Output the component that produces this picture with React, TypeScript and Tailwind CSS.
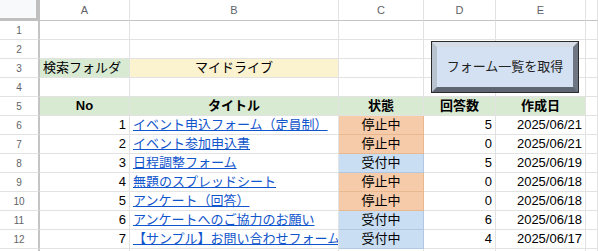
import React from 'react';

type Row = { no: number; title: string; status: '停止中' | '受付中'; count: number; date: string };

const rows: Row[] = [
  { no: 1, title: 'イベント申込フォーム（定員制）', status: '停止中', count: 5, date: '2025/06/21' },
  { no: 2, title: 'イベント参加申込書', status: '停止中', count: 0, date: '2025/06/21' },
  { no: 3, title: '日程調整フォーム', status: '受付中', count: 5, date: '2025/06/19' },
  { no: 4, title: '無題のスプレッドシート', status: '停止中', count: 0, date: '2025/06/18' },
  { no: 5, title: 'アンケート（回答）', status: '停止中', count: 0, date: '2025/06/18' },
  { no: 6, title: 'アンケートへのご協力のお願い', status: '受付中', count: 6, date: '2025/06/18' },
  { no: 7, title: '【サンプル】お問い合わせフォーム', status: '受付中', count: 4, date: '2025/06/17' },
];

const font = "font-['Liberation_Sans','Noto_Sans_CJK_JP',sans-serif]";
const cell = 'h-[19px] border-r border-b border-[#e2e2e2] flex items-center overflow-hidden whitespace-nowrap text-[13px] text-black';
const rowHead = 'h-[19px] border-r-2 border-b border-r-[#c4c4c4] border-b-[#e2e2e2] flex items-center justify-center text-[10px] text-[#5f6368]';
const colHead = 'h-[21px] border-r border-b border-r-[#e2e2e2] border-b-[#c4c4c4] flex items-center justify-center text-[11px] text-[#5f6368]';

const EmptyRow: React.FC<{ n?: number }> = ({ n }) => (
  <>
    <div className={rowHead}>{n}</div>
    {Array.from({ length: 6 }).map((_, i) => (
      <div key={i} className={cell} />
    ))}
  </>
);

export default function App() {
  return (
    <div className={`relative w-[598px] h-[251px] overflow-hidden bg-white ${font}`}>
      <div className="grid grid-cols-[40px_90px_209px_85px_72px_90px_1fr]">
        {/* column header */}
        <div className="h-[21px] bg-[#f8f9fa] border-r-4 border-b-[3px] border-[#c0c0c0]" />
        {['A', 'B', 'C', 'D', 'E', ''].map((c, i) => (
          <div key={i} className={colHead}>{c}</div>
        ))}

        <EmptyRow n={1} />
        <EmptyRow n={2} />

        {/* row 3 */}
        <div className={rowHead}>3</div>
        <div className={`${cell} bg-[#d9ead3] px-[3px]`}>検索フォルダ</div>
        <div className={`${cell} bg-[#fbf2d0] justify-center`}>マイドライブ</div>
        <div className={cell} />
        <div className={cell} />
        <div className={cell} />
        <div className={cell} />

        <EmptyRow n={4} />

        {/* row 5 */}
        <div className={rowHead}>5</div>
        <div className={`${cell} bg-[#d9ead3] justify-center font-bold`}>No</div>
        <div className={`${cell} bg-[#d9ead3] justify-center font-bold`}>タイトル</div>
        <div className={`${cell} bg-[#d9ead3] justify-center font-bold`}>状態</div>
        <div className={`${cell} bg-[#d9ead3] justify-center font-bold`}>回答数</div>
        <div className={`${cell} bg-[#d9ead3] justify-center font-bold`}>作成日</div>
        <div className={cell} />

        {rows.map((r, i) => (
          <React.Fragment key={r.no}>
            <div className={rowHead}>{i + 6}</div>
            <div className={`${cell} justify-end px-[3px]`}>{r.no}</div>
            <div className={`${cell} px-[3px]`}>
              <span className="text-[#1155cc] underline">{r.title}</span>
            </div>
            <div
              className={`${cell} justify-center ${
                r.status === '停止中'
                  ? 'bg-[#f5cba9] text-[#8a5a26] border-r-[#e8b890] border-b-[#e8b890]'
                  : 'bg-[#c9def3] text-[#3d5a98] border-r-[#b0c8e2] border-b-[#b0c8e2]'
              }`}
            >
              {r.status}
            </div>
            <div className={`${cell} justify-end px-[3px]`}>{r.count}</div>
            <div className={`${cell} justify-end px-[3px]`}>{r.date}</div>
            <div className={cell} />
          </React.Fragment>
        ))}

        {/* row 13, mostly off-screen */}
        <EmptyRow />
      </div>

      {/* drawing button */}
      <button
        type="button"
        className="absolute left-[431px] top-[41px] w-[148px] h-[52px] border border-[#2b2b2b] bg-[#2b2b2b] p-0"
      >
        <div className="w-full h-full border-[5px] border-t-[#d6dde6] border-l-[#b9c3cf] border-r-[#6d7682] border-b-[#5e6672] bg-[#d4e1f2] flex items-center justify-center text-[13px] text-[#222]">
          フォーム一覧を取得
        </div>
      </button>
    </div>
  );
}
